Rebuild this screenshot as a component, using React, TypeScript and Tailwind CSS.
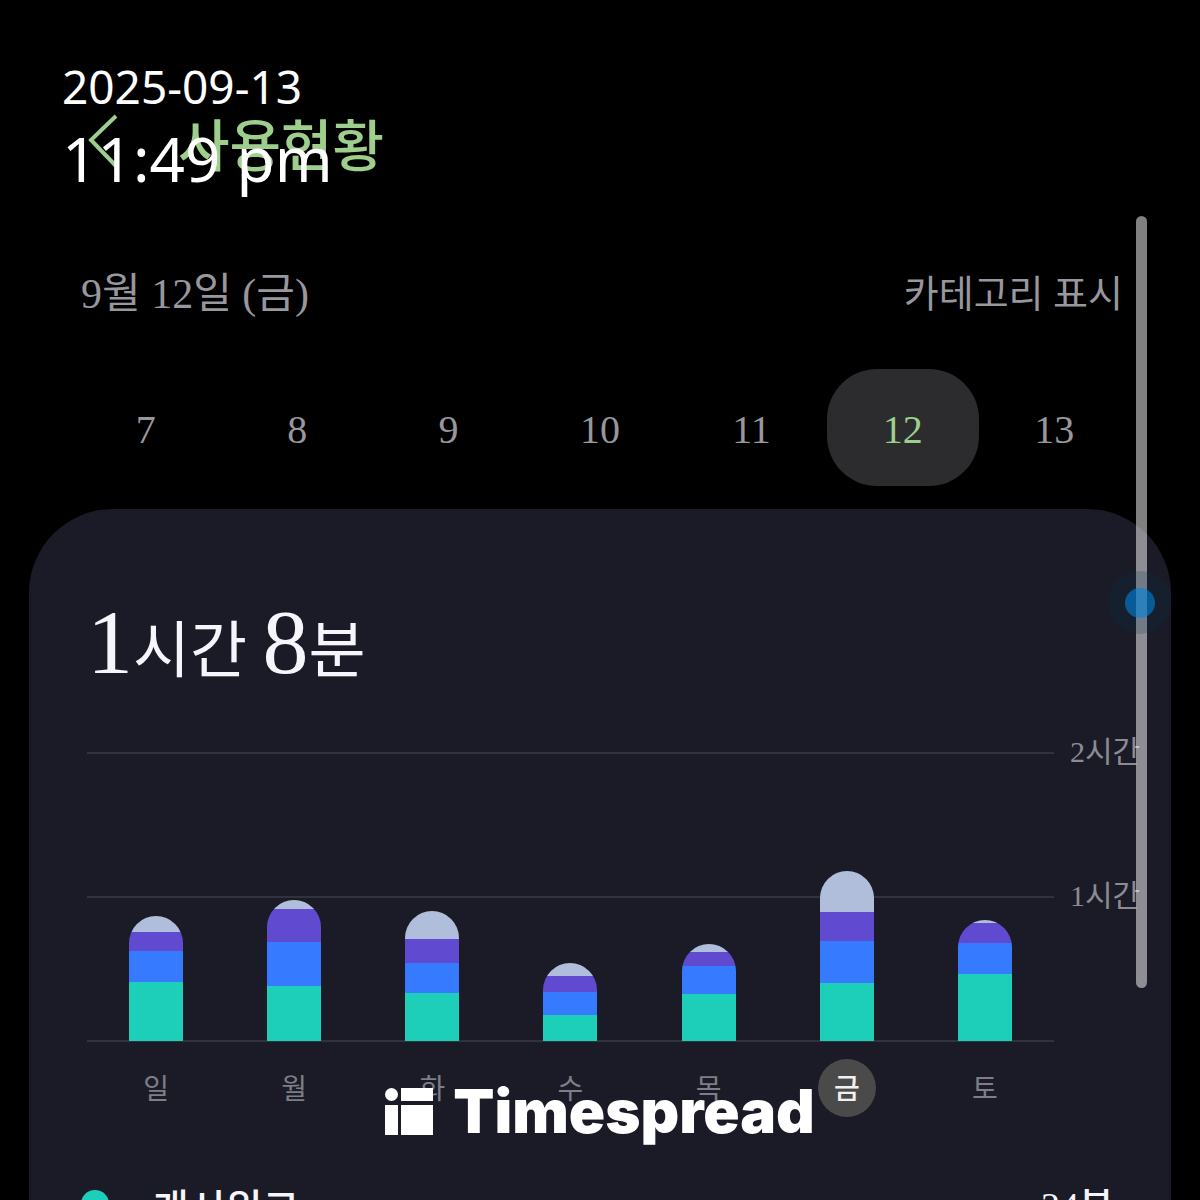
type Segment = 'etc' | 'violet' | 'blue' | 'teal'

type Day = {
  label: string
  selected?: boolean
  // seconds of use per category, top to bottom
  usage: Record<Segment, number>
}

const HOUR_HEIGHT = 144

const dates = [7, 8, 9, 10, 11, 12, 13]
const selectedDate = 12

const segments: { key: Segment; className: string }[] = [
  { key: 'etc', className: 'bg-[#b0bedb]' },
  { key: 'violet', className: 'bg-[#604acf]' },
  { key: 'blue', className: 'bg-[#367aff]' },
  { key: 'teal', className: 'bg-[#1dceb8]' },
]

const week: Day[] = [
  { label: '일', usage: { etc: 400, violet: 475, blue: 775, teal: 1475 } },
  { label: '월', usage: { etc: 225, violet: 825, blue: 1100, teal: 1375 } },
  { label: '화', usage: { etc: 700, violet: 600, blue: 750, teal: 1200 } },
  { label: '수', usage: { etc: 325, violet: 400, blue: 575, teal: 650 } },
  { label: '목', usage: { etc: 200, violet: 350, blue: 700, teal: 1175 } },
  { label: '금', selected: true, usage: { etc: 1025, violet: 725, blue: 1050, teal: 1450 } },
  { label: '토', usage: { etc: 75, violet: 500, blue: 775, teal: 1675 } },
]

function Bar({ day }: { day: Day }) {
  return (
    <div className="w-[54px] overflow-hidden rounded-t-full">
      {segments.map(({ key, className }) => (
        <div
          key={key}
          className={className}
          style={{ height: (day.usage[key] / 3600) * HOUR_HEIGHT }}
        />
      ))}
    </div>
  )
}

function UsageChart() {
  return (
    <div className="mt-[38px] flex">
      <div className="min-w-0 flex-1">
        <div className="relative border-b-2 border-[#30323c]">
          <div className="h-[144px] border-t-2 border-[#30323c]" />
          <div className="h-[144px] border-t-2 border-[#30323c]" />
          <div className="absolute inset-x-0 -bottom-px grid grid-cols-7 items-end justify-items-center">
            {week.map((day) => (
              <Bar key={day.label} day={day} />
            ))}
          </div>
        </div>

        <div className="mt-[17px] grid grid-cols-7 justify-items-center">
          {week.map((day) => (
            <span
              key={day.label}
              className={
                day.selected
                  ? 'flex size-[58px] items-center justify-center rounded-full bg-[#4a4a4a] pt-1 text-[28px] font-medium text-[#f0f0f0]'
                  : 'flex size-[58px] items-center justify-center pt-1 text-[28px] text-[#7d7e87]'
              }
            >
              {day.label}
            </span>
          ))}
        </div>
      </div>

      <div className="-mt-[22px] w-[84px] pl-4 text-[30px] leading-[44px] whitespace-nowrap text-[#8a8b94]">
        <div className="h-[144px]">2시간</div>
        <div className="h-[144px]">1시간</div>
      </div>
    </div>
  )
}

function Timestamp() {
  return (
    <div className="absolute top-[54px] left-[62px] font-['Noto_Sans',sans-serif] text-white">
      <p className="text-[46px] leading-[64px]">2025-09-13</p>
      <p className="text-[62px] leading-[80px]">11:49 pm</p>
    </div>
  )
}

function Brand() {
  return (
    <div className="absolute inset-x-0 top-[1076px] flex items-center justify-center gap-5 text-white">
      <svg className="h-[47px] w-[48px]" viewBox="0 0 48 47" fill="currentColor" aria-hidden="true">
        <circle cx="6.5" cy="6.5" r="6.5" />
        <rect x="16" width="32" height="13" />
        <rect y="17" width="13" height="30" />
        <rect x="16" y="17" width="32" height="30" />
      </svg>
      <span className="font-['Inter',sans-serif] text-[60px] leading-[70px] font-black">Timespread</span>
    </div>
  )
}

export default function App() {
  return (
    <div className="relative h-screen overflow-hidden bg-black font-['Liberation_Serif','Noto_Sans_CJK_KR',serif]">
      <header className="flex items-start gap-[60px] px-[88px] pt-[107px] text-[#9dce8c]">
        <button type="button" aria-label="뒤로" className="mt-[7px]">
          <svg className="h-[54px] w-[30px]" viewBox="0 0 30 54" fill="none" stroke="currentColor" strokeWidth="4">
            <path d="M28 2 3 26l25 26" />
          </svg>
        </button>
        <h1 className="text-[56px] leading-[80px] font-medium">사용현황</h1>
      </header>

      <div className="mt-[77px] flex items-center justify-between pr-[77px] pl-[81px] leading-[60px] text-[#98979d]">
        <h2 className="text-[42px]">9월 12일 (금)</h2>
        <button type="button" className="text-[38px]">카테고리 표시</button>
      </div>

      <nav className="mt-[45px] grid grid-cols-7 px-[70px]">
        {dates.map((date) => (
          <button
            key={date}
            type="button"
            className={
              date === selectedDate
                ? 'h-[117px] rounded-[50px] bg-[#2c2c2e] pt-1 text-[40px] text-[#9dce8c]'
                : 'h-[117px] pt-1 text-[40px] text-[#98979d]'
            }
          >
            {date}
          </button>
        ))}
      </nav>

      <main className="mx-[29px] mt-[23px] min-h-full rounded-t-[84px] bg-[#1a1b26] pt-[71px] pr-[33px] pl-[58px]">
        <p className="text-[62px] leading-[124px] text-[#f6f5fc]">
          <span className="text-[92px]">1</span>시간 <span className="text-[92px]">8</span>분
        </p>

        <UsageChart />

        <div className="mt-[53px] flex items-center pr-6 leading-[56px] text-[#f6f5fc]">
          <span className="-ml-[6px] size-[28px] rounded-full bg-[#1dceb8]" />
          <span className="ml-[43px] flex-1 pt-3 text-[40px] font-medium">캐시워크</span>
          <span className="pt-1 text-[38px] font-medium">24분</span>
        </div>
      </main>

      <div className="absolute top-[216px] right-[53px] h-[772px] w-[11px] rounded-full bg-white/50" />
      <div className="absolute top-[571px] right-[29px] flex size-[63px] items-center justify-center rounded-full bg-[#002b4a]/20">
        <div className="size-[30px] rounded-full bg-[#0083de]/60" />
      </div>

      <Timestamp />
      <Brand />
    </div>
  )
}
